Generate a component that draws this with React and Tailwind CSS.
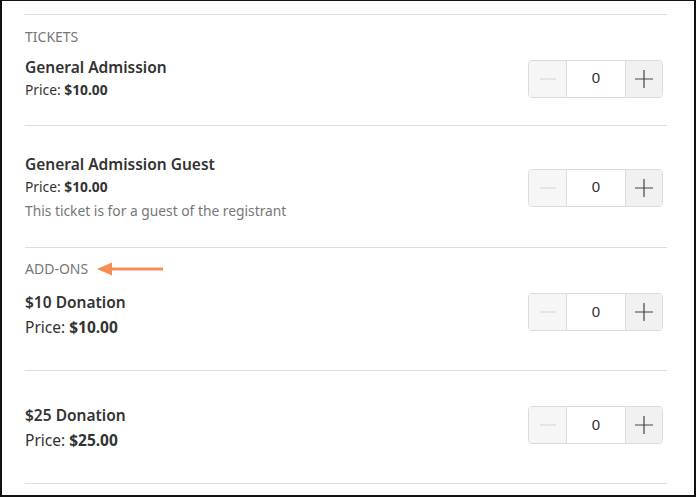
const font = { fontFamily: '"Noto Sans", Lato, sans-serif' }

function Stepper({ className = '' }) {
  return (
    <div className={`flex h-[38px] w-[135px] shrink-0 overflow-hidden rounded-[4px] border border-[#dcdcdc] ${className}`}>
      <button type="button" className="flex w-[37px] items-center justify-center bg-[#f6f6f6]">
        <svg viewBox="0 0 20 20" className="h-[20px] w-[20px]">
          <path d="M2 10h16" stroke="#d4d4d4" strokeWidth="1.2" />
        </svg>
      </button>
      <div className="flex w-[60px] items-center justify-center border-x border-[#dcdcdc] bg-white text-[15px] text-[#333]" style={{ fontFamily: '"Liberation Sans", Arial, sans-serif' }}>
        0
      </div>
      <button type="button" className="flex flex-1 items-center justify-center bg-[#f1f1f1]">
        <svg viewBox="0 0 20 20" className="h-[20px] w-[20px]">
          <path d="M1 10h18M10 1v18" stroke="#444" strokeWidth="1.2" />
        </svg>
      </button>
    </div>
  )
}

function Divider() {
  return <div className="h-px bg-[#dddddd]" />
}

function Arrow() {
  return (
    <svg viewBox="0 0 66 14" className="ml-[9px] h-[14px] w-[66px]">
      <path d="M14 7H66" stroke="#f58c52" strokeWidth="3" />
      <path d="M0 7L15 0.5V13.5Z" fill="#f58c52" />
    </svg>
  )
}

export default function App() {
  return (
    <div className="h-[497px] w-[696px] border-2 border-t border-[#111] bg-white px-[23px] pt-[13px]" style={font}>
      <div className="mr-[4px]">
        <Divider />
        {/* Tickets */}
        <div className="pb-[25px] pt-[14px]">
          <div className="text-[14px] leading-[16px] text-[#777]">TICKETS</div>
          <div className="mt-[12px] flex items-center justify-between">
            <div>
              <div className="text-[15.5px] font-semibold leading-[20px] text-[#333]">General Admission</div>
              <div className="mt-[3px] text-[13.8px] leading-[20px] text-[#333]">
                Price: <span className="font-bold">$10.00</span>
              </div>
            </div>
            <Stepper className="mr-[4px]" />
          </div>
        </div>
        <Divider />
        <div className="flex items-center justify-between pb-[26px] pt-[28px]">
          <div>
            <div className="text-[15.5px] font-semibold leading-[20px] text-[#333]">General Admission Guest</div>
            <div className="mt-[3px] text-[13.8px] leading-[20px] text-[#333]">
              Price: <span className="font-bold">$10.00</span>
            </div>
            <div className="mt-[4px] text-[13.8px] leading-[20px] text-[#777]">This ticket is for a guest of the registrant</div>
          </div>
          <Stepper className="mr-[4px]" />
        </div>
        <Divider />
        {/* Add-ons */}
        <div className="pb-[32px] pt-[13px]">
          <div className="flex items-center text-[14px] leading-[16px] text-[#777]">
            ADD-ONS
            <Arrow />
          </div>
          <div className="mt-[15px] flex items-center justify-between">
            <div>
              <div className="text-[15.5px] font-semibold leading-[20px] text-[#333]">$10 Donation</div>
              <div className="mt-[4px] text-[15.5px] leading-[22px] text-[#333]">
                Price: <span className="font-bold">$10.00</span>
              </div>
            </div>
            <Stepper className="mb-[6px] mr-[4px]" />
          </div>
        </div>
        <Divider />
        <div className="flex items-center justify-between pb-[32px] pt-[34px]">
          <div>
            <div className="text-[15.5px] font-semibold leading-[20px] text-[#333]">$25 Donation</div>
            <div className="mt-[4px] text-[15.5px] leading-[22px] text-[#333]">
              Price: <span className="font-bold">$25.00</span>
            </div>
          </div>
          <Stepper className="mb-[6px] mr-[4px]" />
        </div>
        <Divider />
      </div>
    </div>
  )
}
